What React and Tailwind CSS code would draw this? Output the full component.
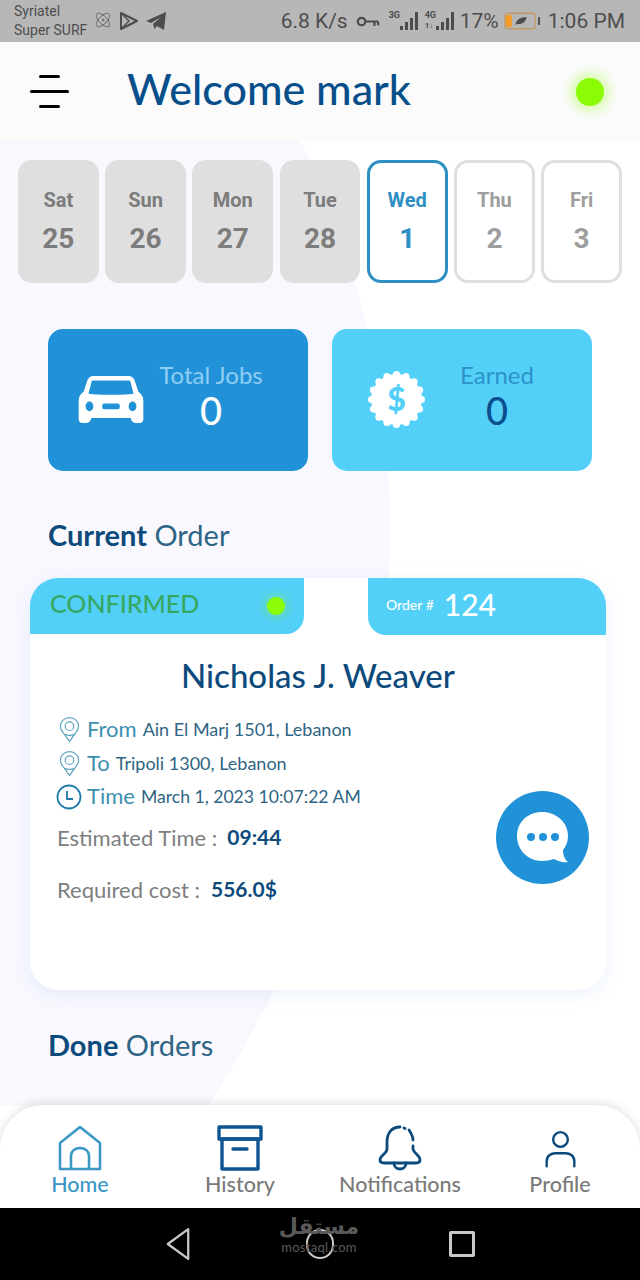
import React from 'react';
import { Atom } from 'lucide-react';

const sans = "font-['Lato',sans-serif]";
const roboto = "font-['Roboto',sans-serif]";

const days = [
  { name: 'Sat', num: 25, state: 'past' },
  { name: 'Sun', num: 26, state: 'past' },
  { name: 'Mon', num: 27, state: 'past' },
  { name: 'Tue', num: 28, state: 'past' },
  { name: 'Wed', num: 1, state: 'active' },
  { name: 'Thu', num: 2, state: 'next' },
  { name: 'Fri', num: 3, state: 'next' },
];

const Signal = ({ label, sub }) => (
  <div className="relative w-[32px] h-[24px]">
    <span className="absolute left-0 top-[1px] text-[9px] leading-[10px] font-bold text-[#4c4c4c]">{label}</span>
    {sub && <span className="absolute left-0 top-[12px] text-[8px] leading-[9px] font-bold text-[#4c4c4c]">{sub}</span>}
    <svg viewBox="0 0 32 24" className="absolute inset-0 w-[32px] h-[24px]" fill="#4c4c4c">
      <rect x="11" y="17" width="3" height="4" />
      <rect x="16" y="13" width="3" height="8" />
      <rect x="21" y="9" width="3" height="12" />
      <rect x="26" y="3" width="3" height="18" />
    </svg>
  </div>
);

const StatusBar = () => (
  <div className={`${roboto} h-[42px] bg-[#b7b7b7] flex items-center text-[#4d4d4d] pl-[14px] pr-[15px] shrink-0`}>
    <div className="text-[14px] leading-[19px] w-[80px]">
      <div>Syriatel</div>
      <div className="whitespace-nowrap">Super SURF</div>
    </div>
    <Atom className="w-[18px] h-[18px] ml-[0px] mt-[-2px]" strokeWidth={1} />
    <svg viewBox="0 0 20 20" className="w-[20px] h-[20px] ml-[7px]" fill="none" stroke="#4d4d4d" strokeWidth="2" strokeLinejoin="round">
      <path d="M2 2 L18 10 L2 18 Z" />
      <path d="M2 2 L10 10 L2 18" strokeWidth="1.4" />
    </svg>
    <svg viewBox="0 0 20 20" className="w-[20px] h-[20px] ml-[7px]" fill="#4d4d4d">
      <path d="M0 10 L20 1 L18 19 L11 15 L8.500 18 L7 13 L15 6 L5 12 Z" />
    </svg>
    <div className="flex-1" />
    <span className="text-[21px] whitespace-nowrap mt-[2px]">6.8 K/s</span>
    <svg viewBox="0 0 26 14" className="w-[24px] h-[13px] ml-[8px]" fill="none" stroke="#4d4d4d" strokeWidth="2.4">
      <circle cx="6" cy="7" r="4" />
      <path d="M10 7 H24 M20 7 V12 M24 7 V11" />
    </svg>
    <div className="ml-[9px]"><Signal label="3G" /></div>
    <div className="ml-[4px]"><Signal label="4G" sub="1↓" /></div>
    <span className="text-[21px] ml-[3px] mt-[2px]">17%</span>
    <svg viewBox="0 0 38 18" className="w-[37px] h-[18px] ml-[5px]" fill="none">
      <rect x="1" y="1" width="31" height="16" rx="2.5" stroke="#c09a66" strokeWidth="1.4" />
      <rect x="2" y="3" width="6" height="12" fill="#f59b23" />
      <path d="M12 13 C12 8 17 5 23 5 C23 10 18 13 14 12 Z" fill="#4d4d4d" />
      <rect x="35" y="5" width="2" height="8" fill="#4d4d4d" />
    </svg>
    <span className="text-[21px] ml-[7px] whitespace-nowrap mt-[2px]">1:06 PM</span>
  </div>
);

const Header = () => (
  <div className="relative h-[99px] bg-[#fbfbfb] flex items-center shrink-0 pl-[30px] pr-[36px]">
    <div className="flex flex-col items-center gap-[12px] w-[39px] mt-[0px]">
      <div className="h-[3px] w-[21px] bg-black rounded-full" />
      <div className="h-[3px] w-[39px] bg-black rounded-full" />
      <div className="h-[3px] w-[21px] bg-black rounded-full" />
    </div>
    <h1 className={`${sans} ml-[58px] text-[43px] leading-none font-medium text-[#074f8b] mt-[-6px] flex-1`}>Welcome mark</h1>
    <div className="w-[28px] h-[28px] rounded-full bg-[#8cfb06] shadow-[0_0_12px_5px_rgba(140,251,6,0.35)]" />
  </div>
);

const DayCard = ({ name, num, state }) => {
  const box =
    state === 'past'
      ? 'bg-[#dfdfdf] text-[#7c7c7c]'
      : state === 'active'
        ? 'bg-white border-[3px] border-[#2e8fc4] text-[#2e8fc4]'
        : 'bg-white border-[3px] border-[#dfdfdf] text-[#9e9e9e]';
  return (
    <div className={`${roboto} ${box} h-[123px] rounded-[14px] flex flex-col items-center justify-center font-bold`}>
      <div className="text-[20px] leading-[24px] mt-[-2px]">{name}</div>
      <div className="text-[28px] leading-[30px] mt-[12px]">{num}</div>
    </div>
  );
};

const Car = () => (
  <svg viewBox="0 0 66 48" className="w-[66px] h-[47px]" fill="white">
    <path fillRule="evenodd" d="M15 0 H51 C54 0 56 2 57 4 L61 16 C64 18 66 21 66 25 V44 C66 46.500 64.500 48 62 48 H58 C55.500 48 54 46.500 53 43 H13 C12 46.500 10.500 48 8 48 H4 C1.500 48 0 46.500 0 44 V25 C0 21 2 18 5 16 L9 4 C10 2 12 0 15 0 Z M13 6 L10 18 C20 19.500 46 19.500 56 18 L53 6 C52.600 5 52 4.500 51 4.500 H15 C14 4.500 13.400 5 13 6 Z M11 26 A4 5 0 1 0 11 36 A4 5 0 1 0 11 26 Z M55 26 A4 5 0 1 0 55 36 A4 5 0 1 0 55 26 Z M26 28 C24.500 28 24 29 24 31 C24 33 24.500 34 26 34 H40 C41.500 34 42 33 42 31 C42 29 41.500 28 40 28 Z" />
  </svg>
);

const Badge = () => {
  const bumps = Array.from({ length: 16 }, (_, i) => {
    const a = (i / 16) * Math.PI * 2;
    return { x: 28 + Math.cos(a) * 24.5, y: 28 + Math.sin(a) * 24.5 };
  });
  return (
    <div className="relative w-[57px] h-[57px] flex items-center justify-center">
      <svg viewBox="0 0 56 56" className="absolute inset-0 w-[57px] h-[57px]" fill="white">
        <circle cx="28" cy="28" r="25" />
        {bumps.map((b, i) => <circle key={i} cx={b.x} cy={b.y} r="3.5" />)}
      </svg>
      <span className={`${sans} relative text-[32px] leading-none font-black text-[#53d0f8]`}>$</span>
    </div>
  );
};

const StatCard = ({ icon, label, value, bg, labelColor, valueColor, iconBox, textBox }) => (
  <div className={`${bg} h-[142px] rounded-[15px] flex items-start ${sans}`}>
    <div className={`${iconBox} flex items-center justify-center h-full pb-[2px]`}>{icon}</div>
    <div className={`${textBox} flex flex-col items-center pt-[29px]`}>
      <div className={`${labelColor} text-[24px] leading-[34px] whitespace-nowrap`}>{label}</div>
      <div className={`${valueColor} text-[38px] leading-[36px] font-medium`}>{value}</div>
    </div>
  </div>
);

const Pin = () => (
  <svg viewBox="0 0 22 28" className="w-[21px] h-[27px]" fill="none" stroke="#5aa3bf" strokeWidth="1.2">
    <path d="M11 26.500 L4.500 17.500 C2.500 15 1.500 13 1.500 10.500 C1.500 5.500 5.500 1.500 11 1.500 C16.500 1.500 20.500 5.500 20.500 10.500 C20.500 13 19.500 15 17.500 17.500 Z" />
    <circle cx="11" cy="10.500" r="4.500" />
    <path d="M6 19 C8 20.500 14 20.500 16 19" />
  </svg>
);

const Clock = () => (
  <svg viewBox="0 0 26 26" className="w-[26px] h-[26px]" fill="none" stroke="#1f7ba8" strokeWidth="1.8">
    <circle cx="13" cy="13" r="11.500" />
    <path d="M11 7 V15 H17" />
  </svg>
);

const InfoRow = ({ icon, label, value, valueSize = 'text-[18px]', labelPos = 'mt-[-2px]' }) => (
  <div className="flex items-center h-[34px] pl-[26px]">
    <div className="w-[26px] flex justify-center">{icon}</div>
    <span className={`text-[22px] text-[#3d8fb0] ml-[5px] whitespace-nowrap ${labelPos}`}>{label}</span>
    <span className={`${valueSize} text-[#2f6584] ml-[6px] whitespace-nowrap`}>{value}</span>
  </div>
);

const OrderCard = () => (
  <div className={`${sans} relative mx-[30px] w-[576px] h-[412px] bg-white rounded-[28px] shadow-[0_4px_18px_rgba(90,140,230,0.12)] overflow-hidden`}>
    <div className="flex items-start justify-between">
      <div className="w-[274px] h-[56px] bg-[#53d0f8] rounded-br-[18px] flex items-center pl-[20px]">
        <span className="text-[25px] font-medium text-[#37a862] flex-1 mt-[-5px]">CONFIRMED</span>
        <span className="w-[18px] h-[18px] rounded-full bg-[#8cfb06] shadow-[0_0_8px_3px_rgba(140,251,6,0.3)] mr-[19px]" />
      </div>
      <div className="w-[238px] h-[57px] bg-[#53d0f8] rounded-bl-[18px] flex items-center pl-[18px] text-white">
        <span className="text-[14px] font-medium mt-[-5px]">Order #</span>
        <span className="text-[30px] font-medium ml-[10px] leading-none mt-[-6px]">124</span>
      </div>
    </div>
    <h2 className="text-center text-[33px] leading-[40px] font-medium text-[#0d4a7c] mt-[20px]">Nicholas J. Weaver</h2>
    <div className="mt-[17px]">
      <InfoRow icon={<Pin />} label="From" value="Ain El Marj 1501, Lebanon" />
      <InfoRow icon={<Pin />} label="To" value="Tripoli 1300, Lebanon" />
      <InfoRow icon={<Clock />} label="Time" value="March 1, 2023 10:07:22 AM" valueSize="text-[17.6px]" labelPos="mt-[-4px]" />
    </div>
    <div className="pl-[27px] mt-[6px] flex items-center h-[34px] text-[22px] text-[#7e7e7e] whitespace-nowrap">
      Estimated Time :<span className="ml-[10px] text-[21px] font-bold text-[#0d4a7c]">09:44</span>
    </div>
    <div className="pl-[27px] mt-[18px] flex items-center h-[34px] text-[22px] text-[#7e7e7e] whitespace-nowrap">
      Required cost :<span className="ml-[11px] text-[21px] font-bold text-[#0d4a7c]">556.0$</span>
    </div>
    <div className="absolute right-[17px] top-[213px] w-[93px] h-[93px] rounded-full bg-[#2292d8] flex items-center justify-center">
      <svg viewBox="0 0 54 54" className="w-[54px] h-[54px]">
        <path d="M26 1 C40 1 52 11 52 25 C52 31 50 35 47 39 C47 44 49 49 52 51 C47 52 42 50 38 48 C34 49 30 50 26 50 C12 50 1 39 1 25 C1 11 12 1 26 1 Z" fill="white" />
        <circle cx="15" cy="26" r="4" fill="#2292d8" />
        <circle cx="27" cy="26" r="4" fill="#2292d8" />
        <circle cx="39" cy="26" r="4" fill="#2292d8" />
      </svg>
    </div>
  </div>
);

const SectionTitle = ({ bold, rest }) => (
  <div className={`${sans} pl-[48px] text-[29px] leading-[36px] text-[#0d4a7c]`}>
    <span className="font-bold">{bold}</span> <span className="text-[#2f6584]">{rest}</span>
  </div>
);

const NavItem = ({ icon, label, color }) => (
  <div className="flex flex-col items-center">
    <div className="h-[48px] flex items-end">{icon}</div>
    <span className={`${sans} ${color} text-[21.5px] leading-[28px] mt-[-1px] font-medium whitespace-nowrap`}>{label}</span>
  </div>
);

const BottomNav = () => (
  <div className="relative h-[103px] bg-white rounded-t-[44px] shadow-[0_-2px_10px_rgba(0,0,0,0.12)] grid grid-cols-4 pt-[18px] shrink-0">
    <NavItem
      color="text-[#3a97c6]"
      label="Home"
      icon={
        <svg viewBox="0 0 44 46" className="w-[44px] h-[46px]" fill="none" stroke="#3a97c6" strokeWidth="2.6" strokeLinejoin="round">
          <path d="M2 44 V18 L22 2 L42 18 V44 Z" />
          <path d="M13 44 V31 C13 26 17 23 22 23 C27 23 31 26 31 31 V44" />
        </svg>
      }
    />
    <NavItem
      color="text-[#7a7a7a]"
      label="History"
      icon={
        <svg viewBox="0 0 46 46" className="w-[46px] h-[46px]" fill="none" stroke="#0d5692" strokeWidth="3.4" strokeLinejoin="round">
          <rect x="2" y="2" width="42" height="12" />
          <rect x="5" y="14" width="36" height="30" />
          <path d="M16 24 H30" strokeLinecap="round" />
        </svg>
      }
    />
    <NavItem
      color="text-[#7a7a7a]"
      label="Notifications"
      icon={
        <svg viewBox="0 0 44 46" className="w-[44px] h-[46px]" fill="none" stroke="#0d4a7c" strokeWidth="2.8" strokeLinecap="round" strokeLinejoin="round">
          <path d="M22 2 C13 2 9 9 9 17 V24 C9 29 2 30 2 35 C2 37 4 38 6 38 H38 C40 38 42 37 42 35 C42 30 36 29 35 24 V21" />
          <path d="M35 15 C35 12 33 8 31 5" />
          <path d="M26 3 L27 3.500" />
          <path d="M16 38 C16 42 19 44 22 44 C25 44 28 42 28 38" />
        </svg>
      }
    />
    <NavItem
      color="text-[#7a7a7a]"
      label="Profile"
      icon={
        <svg viewBox="0 0 36 44" className="w-[35px] h-[38px] mb-[3px]" fill="none" stroke="#0d4a7c" strokeWidth="2.8" strokeLinecap="round">
          <circle cx="18" cy="11" r="8.500" />
          <path d="M2 42 V36 C2 30 7 27 12 27 H24 C29 27 34 30 34 36 V42" />
        </svg>
      }
    />
  </div>
);

const SystemNav = () => (
  <div className="relative h-[72px] bg-black flex items-center justify-center gap-[115px] shrink-0">
    <svg viewBox="0 0 28 36" className="w-[26px] h-[34px]" fill="none" stroke="#c9c9c9" strokeWidth="2.4" strokeLinejoin="round">
      <path d="M25 2 L3 18 L25 34 Z" />
    </svg>
    <div className="w-[28px] h-[30px] rounded-full border-[2.5px] border-[#c9c9c9]" />
    <div className="w-[26px] h-[26px] rounded-[2px] border-[3px] border-[#c9c9c9]" />
    <div className="absolute left-[280px] top-[6px] w-[78px] flex flex-col items-center text-[#5a5a5a]">
      <span className="font-['DejaVu_Sans',sans-serif] text-[22px] leading-[26px] font-bold">مستقل</span>
      <span className={`${sans} text-[13px] leading-[14px] tracking-[0.3px]`}>mostaql.com</span>
    </div>
  </div>
);

export default function App() {
  return (
    <div className="w-[640px] h-[1280px] flex flex-col overflow-hidden bg-white">
      <StatusBar />
      <Header />
      <div className="relative flex-1 min-h-0">
        {/* pale background blob */}
        <svg viewBox="0 0 640 965" className="absolute inset-0 w-[640px] h-[965px]">
          <path d="M0 0 H300 C350 90 392 250 390 395 C388 600 310 810 208 965 H0 Z" fill="#f8f8fe" />
        </svg>
        <div className="relative">
          <div className="grid grid-cols-7 gap-[6.5px] px-[18px] pt-[19px]">
            {days.map((d) => <DayCard key={d.name} {...d} />)}
          </div>
          <div className="flex gap-[24px] px-[48px] mt-[46px]">
            <div className="w-[260px]">
              <StatCard
                icon={<Car />}
                label="Total Jobs"
                value="0"
                bg="bg-[#2292d8]"
                labelColor="text-[#8fcdf3]"
                valueColor="text-white"
                iconBox="w-[126px]"
                textBox="w-[74px]"
              />
            </div>
            <div className="w-[260px]">
              <StatCard
                icon={<Badge />}
                label="Earned"
                value="0"
                bg="bg-[#53d0f8]"
                labelColor="text-[#2b93c9]"
                valueColor="text-[#0b4f8f]"
                iconBox="w-[129px]"
                textBox="w-[72px]"
              />
            </div>
          </div>
          <div className="mt-[46px]"><SectionTitle bold="Current" rest="Order" /></div>
          <div className="mt-[25px]"><OrderCard /></div>
          <div className="mt-[37px]"><SectionTitle bold="Done" rest="Orders" /></div>
        </div>
      </div>
      <BottomNav />
      <SystemNav />
    </div>
  );
}
